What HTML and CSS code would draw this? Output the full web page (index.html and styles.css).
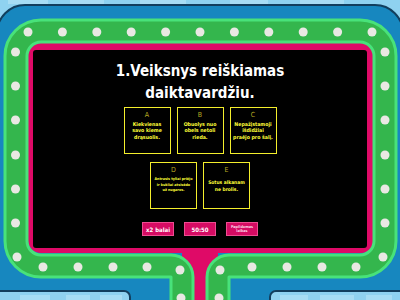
FILE: index.html
```html
<!DOCTYPE html>
<html lang="lt">
<head>
<meta charset="utf-8">
<title>Gameshow quiz</title>
<link rel="stylesheet" href="styles.css">
</head>
<body>
<div class="stage">
  <svg class="frame" width="400" height="300" viewBox="0 0 400 300" aria-hidden="true">
    <rect x="0" y="0" width="400" height="300" fill="#8fd2f0"/>
    <g fill="#a7ddf4">
      <rect x="8" y="0" width="40" height="4"/>
      <rect x="70" y="0" width="34" height="4"/>
      <rect x="140" y="0" width="46" height="4"/>
      <rect x="230" y="0" width="38" height="4"/>
      <rect x="300" y="0" width="44" height="4"/>
      <rect x="20" y="295" width="30" height="5"/>
      <rect x="66" y="295" width="24" height="5"/>
      <rect x="100" y="295" width="22" height="5"/>
      <rect x="280" y="295" width="28" height="5"/>
      <rect x="320" y="295" width="34" height="5"/>
      <rect x="366" y="295" width="26" height="5"/>
    </g>
    <path d="M 25,5 H 375 A 28 28 0 0 1 403 33 V 291 H 276 A 6 6 0 0 0 270 297 V 312 H 130 V 297 A 6 6 0 0 0 124 291 H -3 V 33 A 28 28 0 0 1 25 5 Z" fill="#1787bf" stroke="#123f5e" stroke-width="2"/>
    <path d="M 40,43 H 361 A 13 13 0 0 1 374 56 V 240 A 13 13 0 0 1 361 253 H 218 V 310 H 182 V 253 H 41 A 13 13 0 0 1 28 240 V 56 A 13 13 0 0 1 41 43 Z" fill="#df0a67"/>
    <g fill="none" stroke-linejoin="round">
      <path d="M 182,312 V 277 A 11 11 0 0 0 171,266 H 41 A 25 25 0 0 1 16,241 V 56 A 25 25 0 0 1 41,31 H 360 A 25 25 0 0 1 385,56 V 241 A 25 25 0 0 1 360,266 H 229 A 11 11 0 0 0 218,277 V 312" stroke="#48e27a" stroke-width="25"/>
      <path d="M 182,312 V 277 A 11 11 0 0 0 171,266 H 41 A 25 25 0 0 1 16,241 V 56 A 25 25 0 0 1 41,31 H 360 A 25 25 0 0 1 385,56 V 241 A 25 25 0 0 1 360,266 H 229 A 11 11 0 0 0 218,277 V 312" stroke="#34b64d" stroke-width="19"/>
    </g>
    <g fill="#e9e8e3">
      <circle cx="28" cy="32" r="4.5"/><circle cx="62.4" cy="32" r="4.5"/><circle cx="96.8" cy="32" r="4.5"/><circle cx="131.2" cy="32" r="4.5"/><circle cx="165.6" cy="32" r="4.5"/><circle cx="200" cy="32" r="4.5"/><circle cx="234.4" cy="32" r="4.5"/><circle cx="268.8" cy="32" r="4.5"/><circle cx="303.2" cy="32" r="4.5"/><circle cx="337.6" cy="32" r="4.5"/><circle cx="372" cy="32" r="4.5"/>
      <circle cx="15.5" cy="52" r="4.5"/><circle cx="15.5" cy="86" r="4.5"/><circle cx="15.5" cy="120" r="4.5"/><circle cx="15.5" cy="155" r="4.5"/><circle cx="15.5" cy="189" r="4.5"/><circle cx="15.5" cy="223" r="4.5"/><circle cx="17" cy="257" r="4.5"/>
      <circle cx="385" cy="52" r="4.5"/><circle cx="385" cy="86" r="4.5"/><circle cx="385" cy="120" r="4.5"/><circle cx="385" cy="155" r="4.5"/><circle cx="385" cy="189" r="4.5"/><circle cx="385" cy="223" r="4.5"/><circle cx="383" cy="257" r="4.5"/>
      <circle cx="43" cy="267" r="4.5"/><circle cx="78" cy="267" r="4.5"/><circle cx="113" cy="267" r="4.5"/><circle cx="147" cy="267" r="4.5"/><circle cx="180" cy="270" r="4.5"/><circle cx="181" cy="298" r="4.5"/>
      <circle cx="252" cy="267" r="4.5"/><circle cx="287" cy="267" r="4.5"/><circle cx="322" cy="267" r="4.5"/><circle cx="356" cy="267" r="4.5"/><circle cx="220" cy="270" r="4.5"/><circle cx="219" cy="298" r="4.5"/>
    </g>
  </svg>
  <main class="screen">
    <h1 class="question">1.Veiksnys reiškiamas<br>daiktavardžiu.</h1>
    <div class="answers">
      <div class="row">
        <div class="card"><span class="key">A</span><span class="txt">Kiekvienas<br>savo kieme<br>drąsuolis.</span></div>
        <div class="card"><span class="key">B</span><span class="txt">Obuolys nuo<br>obels netoli<br>rieda.</span></div>
        <div class="card"><span class="key">C</span><span class="txt">Nepažįstamoji<br>išdidžiai<br>praėjo pro šalį.</span></div>
      </div>
      <div class="row">
        <div class="card"><span class="key">D</span><span class="txt small">Antrasis tyliai priėjo<br>ir kukliai atsisėdo<br>už nugaros.</span></div>
        <div class="card"><span class="key">E</span><span class="txt big">Sotus alkanam<br>ne brolis.</span></div>
      </div>
    </div>
    <div class="powerups">
      <button class="power">x2 balai</button>
      <button class="power">50:50</button>
      <button class="power tiny">Papildomas<br>laikas</button>
    </div>
  </main>
</div>
</body>
</html>
```

FILE: styles.css
```css
* { box-sizing: border-box; }

html, body {
  margin: 0;
  padding: 0;
  background: #8fd2f0;
}

.stage {
  position: relative;
  width: 400px;
  height: 300px;
  overflow: hidden;
  padding: 50px 0 0 33px;
  font-family: "DejaVu Sans Condensed", "DejaVu Sans", sans-serif;
}

.frame {
  position: absolute;
  left: 0;
  top: 0;
  display: block;
}

.screen {
  position: relative;
  width: 334px;
  height: 198px;
  background: #000;
  border-radius: 3px;
  padding-top: 10px;
  display: flex;
  flex-direction: column;
  align-items: center;
}

.question {
  margin: 0;
  color: #fff;
  font-size: 15px;
  line-height: 22px;
  font-weight: bold;
  text-align: center;
  letter-spacing: 0;
}

.answers {
  margin-top: 3px;
  display: flex;
  flex-direction: column;
  gap: 8px;
}

.row {
  display: flex;
  justify-content: center;
  gap: 6px;
}

.card {
  width: 47px;
  height: 47px;
  border: 1.5px solid #f4ee2c;
  display: grid;
  justify-items: center;
}

.key, .txt {
  grid-area: 1 / 1;
}

.key {
  align-self: start;
  margin-top: 3px;
  color: #b9a923;
  font-size: 7px;
  line-height: 8px;
}

.txt {
  align-self: center;
  color: #ffff38;
  font-weight: bold;
  font-size: 5.2px;
  line-height: 6.5px;
  text-align: center;
  white-space: nowrap;
}

.txt.small {
  font-size: 3.7px;
  line-height: 5.8px;
}

.txt.big {
  font-size: 4.9px;
  line-height: 7px;
}

.powerups {
  margin-top: 13px;
  display: flex;
  gap: 10px;
}

.power {
  width: 32px;
  height: 14px;
  margin: 0;
  padding: 0;
  background: #d60b63;
  border: 1px solid #ee4d91;
  color: #fff;
  font-family: inherit;
  font-weight: bold;
  font-size: 6px;
  line-height: 7px;
}

.power.tiny {
  font-size: 3.8px;
  line-height: 4.4px;
  color: #fcd6e6;
}
```
